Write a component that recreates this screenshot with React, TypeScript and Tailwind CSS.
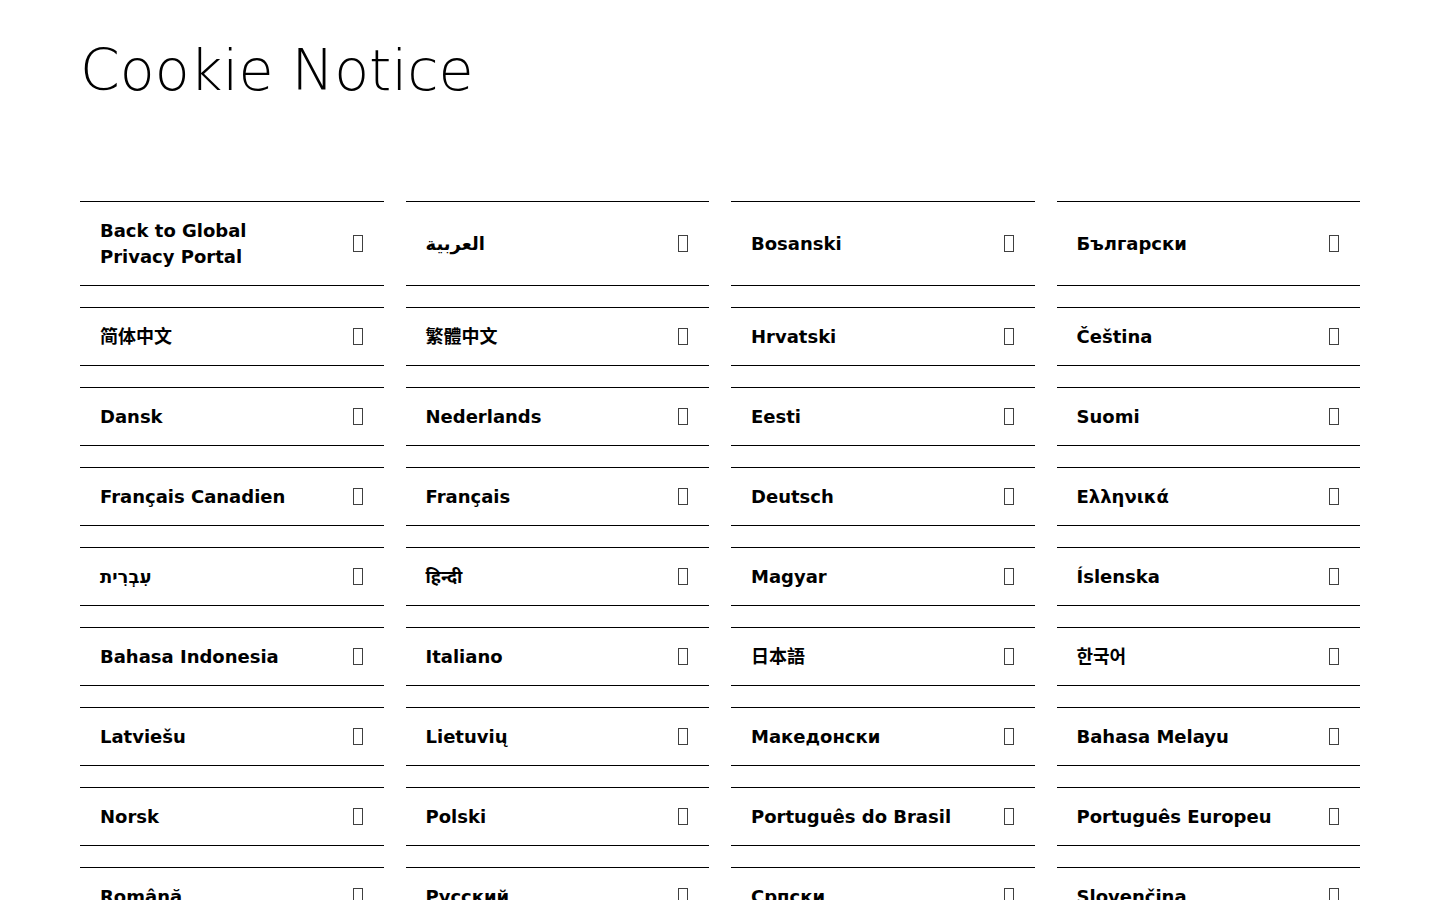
import React from 'react';

const languages: string[] = [
  'Back to Global Privacy Portal',
  'العربية',
  'Bosanski',
  'Български',
  '简体中文',
  '繁體中文',
  'Hrvatski',
  'Čeština',
  'Dansk',
  'Nederlands',
  'Eesti',
  'Suomi',
  'Français Canadien',
  'Français',
  'Deutsch',
  'Ελληνικά',
  'עִבְרִית',
  'हिन्दी',
  'Magyar',
  'Íslenska',
  'Bahasa Indonesia',
  'Italiano',
  '日本語',
  '한국어',
  'Latviešu',
  'Lietuvių',
  'Македонски',
  'Bahasa Melayu',
  'Norsk',
  'Polski',
  'Português do Brasil',
  'Português Europeu',
  'Română',
  'Русский',
  'Српски',
  'Slovenčina',
  'Slovenščina',
  'Español',
  'Svenska',
  'ไทย',
  'Türkçe',
  'Українська',
  'Tiếng Việt',
  'English',
];

const LanguageLink: React.FC<{ label: string }> = ({ label }) => (
  <a
    href="#"
    className="flex items-center justify-between gap-4 border-y border-black py-[15.5px] pl-5 pr-5 text-black"
  >
    <span className="max-w-[212px] text-[18px] font-bold leading-[26px]">{label}</span>
    <span className="mr-[1px] inline-block h-[17px] w-[10px] shrink-0 border border-neutral-700" aria-hidden="true" />
  </a>
);

export default function App() {
  return (
    <div
      className="min-h-screen bg-white px-20 pt-[42px] pb-20 text-black"
      style={{ fontFamily: '"DejaVu Sans", "Noto Sans", "Noto Sans CJK SC", "Noto Sans CJK JP", "Noto Sans CJK KR", sans-serif' }}
    >
      <h1 className="text-[57px] font-extralight leading-none">Cookie Notice</h1>

      <div className="mt-[102px] grid grid-cols-4 gap-x-[22px] gap-y-[21px]">
        {languages.map((lang) => (
          <LanguageLink key={lang} label={lang} />
        ))}
      </div>
    </div>
  );
}
